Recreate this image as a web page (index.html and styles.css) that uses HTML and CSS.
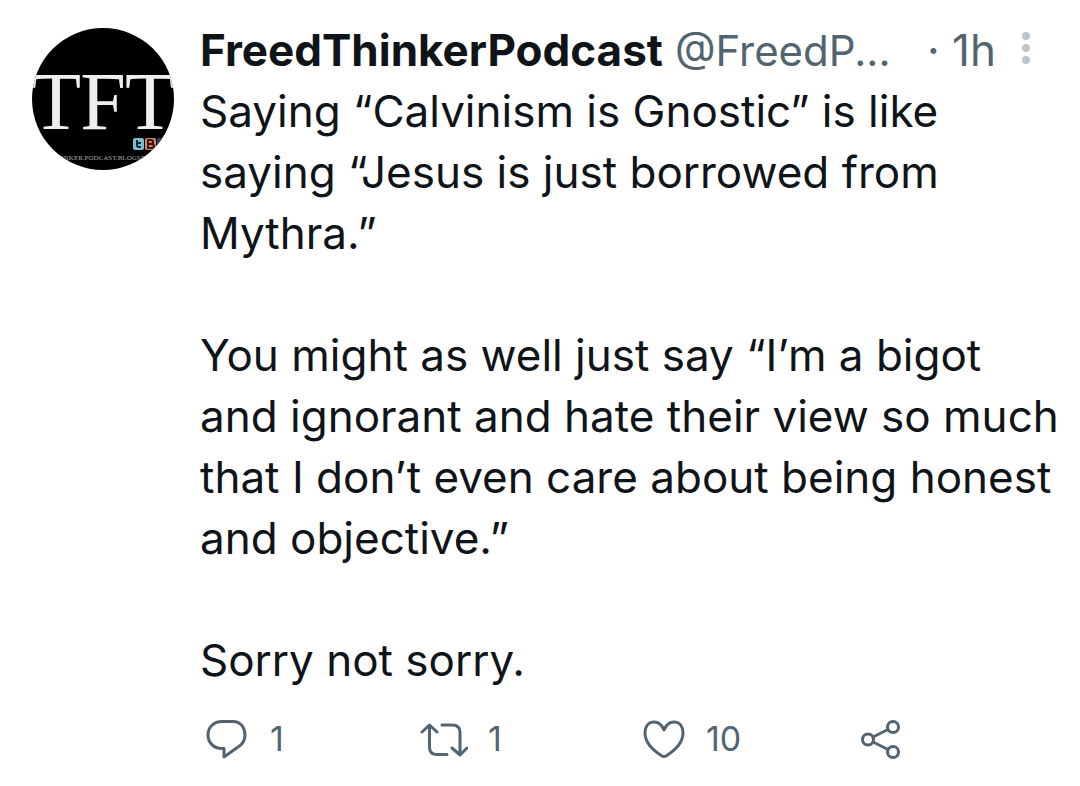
FILE: index.html
```html
<!DOCTYPE html>
<html lang="en">
<head>
<meta charset="utf-8">
<meta name="viewport" content="width=device-width, initial-scale=1">
<title>FreedThinkerPodcast</title>
<link rel="stylesheet" href="styles.css">
</head>
<body>
<article class="post">
  <a class="avatar" href="#" aria-label="FreedThinkerPodcast profile">
    <svg viewBox="0 0 142 142" aria-hidden="true">
      <defs>
        <clipPath id="round"><circle cx="71" cy="71" r="71"/></clipPath>
      </defs>
      <g clip-path="url(#round)">
        <rect width="142" height="142" fill="#000"/>
        <g class="monogram">
          <text x="24" y="101">T</text>
          <text x="71" y="101">F</text>
          <text x="118" y="101">T</text>
        </g>
        <rect x="101" y="110" width="11" height="12" rx="2" fill="#79bdd0"/>
        <path d="M105 112v5q0 2 2 2h2M105 115h4" fill="none" stroke="#10252d" stroke-width="2"/>
        <rect x="113" y="110" width="11" height="12" rx="2" fill="#d98560"/>
        <path d="M116 112h3q2 0 2 2t-2 2q3 0 3 2t-3 2h-3zM116 116h3" fill="none" stroke="#341409" stroke-width="2"/>
        <rect x="125" y="110" width="11" height="12" rx="2" fill="#33405f"/>
        <text class="site" x="71" y="132">THINKER.PODCAST.BLOGSPOT</text>
      </g>
    </svg>
  </a>
  <div class="content">
    <header class="head">
      <a class="name" href="#">FreedThinkerPodcast</a>
      <a class="handle" href="#">@FreedP...</a>
      <span class="time">· 1h</span>
      <button class="more" type="button" aria-label="More">
        <svg viewBox="0 0 8 32" aria-hidden="true"><circle cx="4" cy="4" r="4"/><circle cx="4" cy="16" r="4"/><circle cx="4" cy="28" r="4"/></svg>
      </button>
    </header>
    <div class="body">
      <p>Saying “Calvinism is Gnostic” is like<br>saying “Jesus is just borrowed from<br>Mythra.”</p>
      <p>You might as well just say “I’m a bigot<br>and ignorant and hate their view so much<br>that I don’t even care about being honest<br>and objective.”</p>
      <p>Sorry not sorry.</p>
    </div>
    <footer class="actions">
      <button class="action" type="button" aria-label="Reply, 1">
        <svg viewBox="0 0 48 48" aria-hidden="true"><path d="M20 6.500h11C39 6.500 43 13 43 20C43 26 41 29 36 32L22 42V33.500H20C11 33.500 6 27 6 20C6 12 12 6.500 20 6.500Z"/></svg>
        <span>1</span>
      </button>
      <button class="action" type="button" aria-label="Repost, 1">
        <svg viewBox="0 0 48 48" aria-hidden="true"><path d="M2 17L9.500 10L17 17M9.500 11V32Q9.500 39.500 17 39.500H27M22 10H32Q40 10 40 17V39M32 33L40 40L47 33"/></svg>
        <span>1</span>
      </button>
      <button class="action" type="button" aria-label="Like, 10">
        <svg viewBox="0 0 48 48" aria-hidden="true"><path d="M26 15C24 10 20 7 16 7C10 7 7 12 7 18C7 28 16 36 24 41Q26 42 28 41C36 36 45 28 45 18C45 12 42 7 36 7C32 7 28 10 26 15Z"/></svg>
        <span>10</span>
      </button>
      <button class="action" type="button" aria-label="Share">
        <svg viewBox="0 0 48 48" aria-hidden="true"><circle cx="12" cy="24.500" r="5.500"/><circle cx="37" cy="12" r="5.500"/><circle cx="37" cy="37" r="5.500"/><path d="M17 22L32 14.500M17 27L32 34.500"/></svg>
      </button>
    </footer>
  </div>
</article>
</body>
</html>
```
FILE: styles.css
```css
* { box-sizing: border-box; }
body {
  margin: 0;
  background: #fff;
  color: #0f1419;
  font-family: Inter, "Liberation Sans", sans-serif;
  font-size: 44px;
  line-height: 61px;
}
a { color: inherit; text-decoration: none; }
button {
  padding: 0;
  border: 0;
  background: none;
  color: inherit;
  font: inherit;
  cursor: pointer;
}
.post {
  display: flex;
  gap: 26px;
  padding: 20px 6px 16px 32px;
}
.avatar { flex: none; width: 142px; padding-top: 8px; }
.avatar svg { display: block; width: 100%; }
.monogram {
  fill: #eee;
  font-family: "Liberation Serif", serif;
  font-size: 82px;
  text-anchor: middle;
}
.site {
  fill: #aaa;
  font-family: "Liberation Serif", serif;
  font-size: 7px;
  text-anchor: middle;
}
.content { flex: 1; min-width: 0; }
.head {
  display: flex;
  gap: 12px;
  white-space: nowrap;
}
.name { font-weight: 700; }
.handle, .time { color: #536471; font-size: 42px; }
.time { margin-left: auto; font-size: 44px; }
.more { margin: 12px 44px 0 14px; height: 32px; }
.more svg { display: block; width: 8px; height: 32px; fill: #b9c6cd; }
.body p { margin: 0 0 61px; white-space: nowrap; }
.body p:last-child { margin-bottom: 0; }
.actions {
  display: grid;
  grid-template-columns: repeat(4, 1fr);
  max-width: 876px;
  padding-left: 2px;
  margin-top: 24px;
  color: #536471;
  font-size: 34px;
  line-height: 48px;
}
.action { display: flex; align-items: center; gap: 20px; }
.action svg {
  width: 48px;
  height: 48px;
  fill: none;
  stroke: currentColor;
  stroke-width: 3;
  stroke-linecap: round;
  stroke-linejoin: round;
}
```
